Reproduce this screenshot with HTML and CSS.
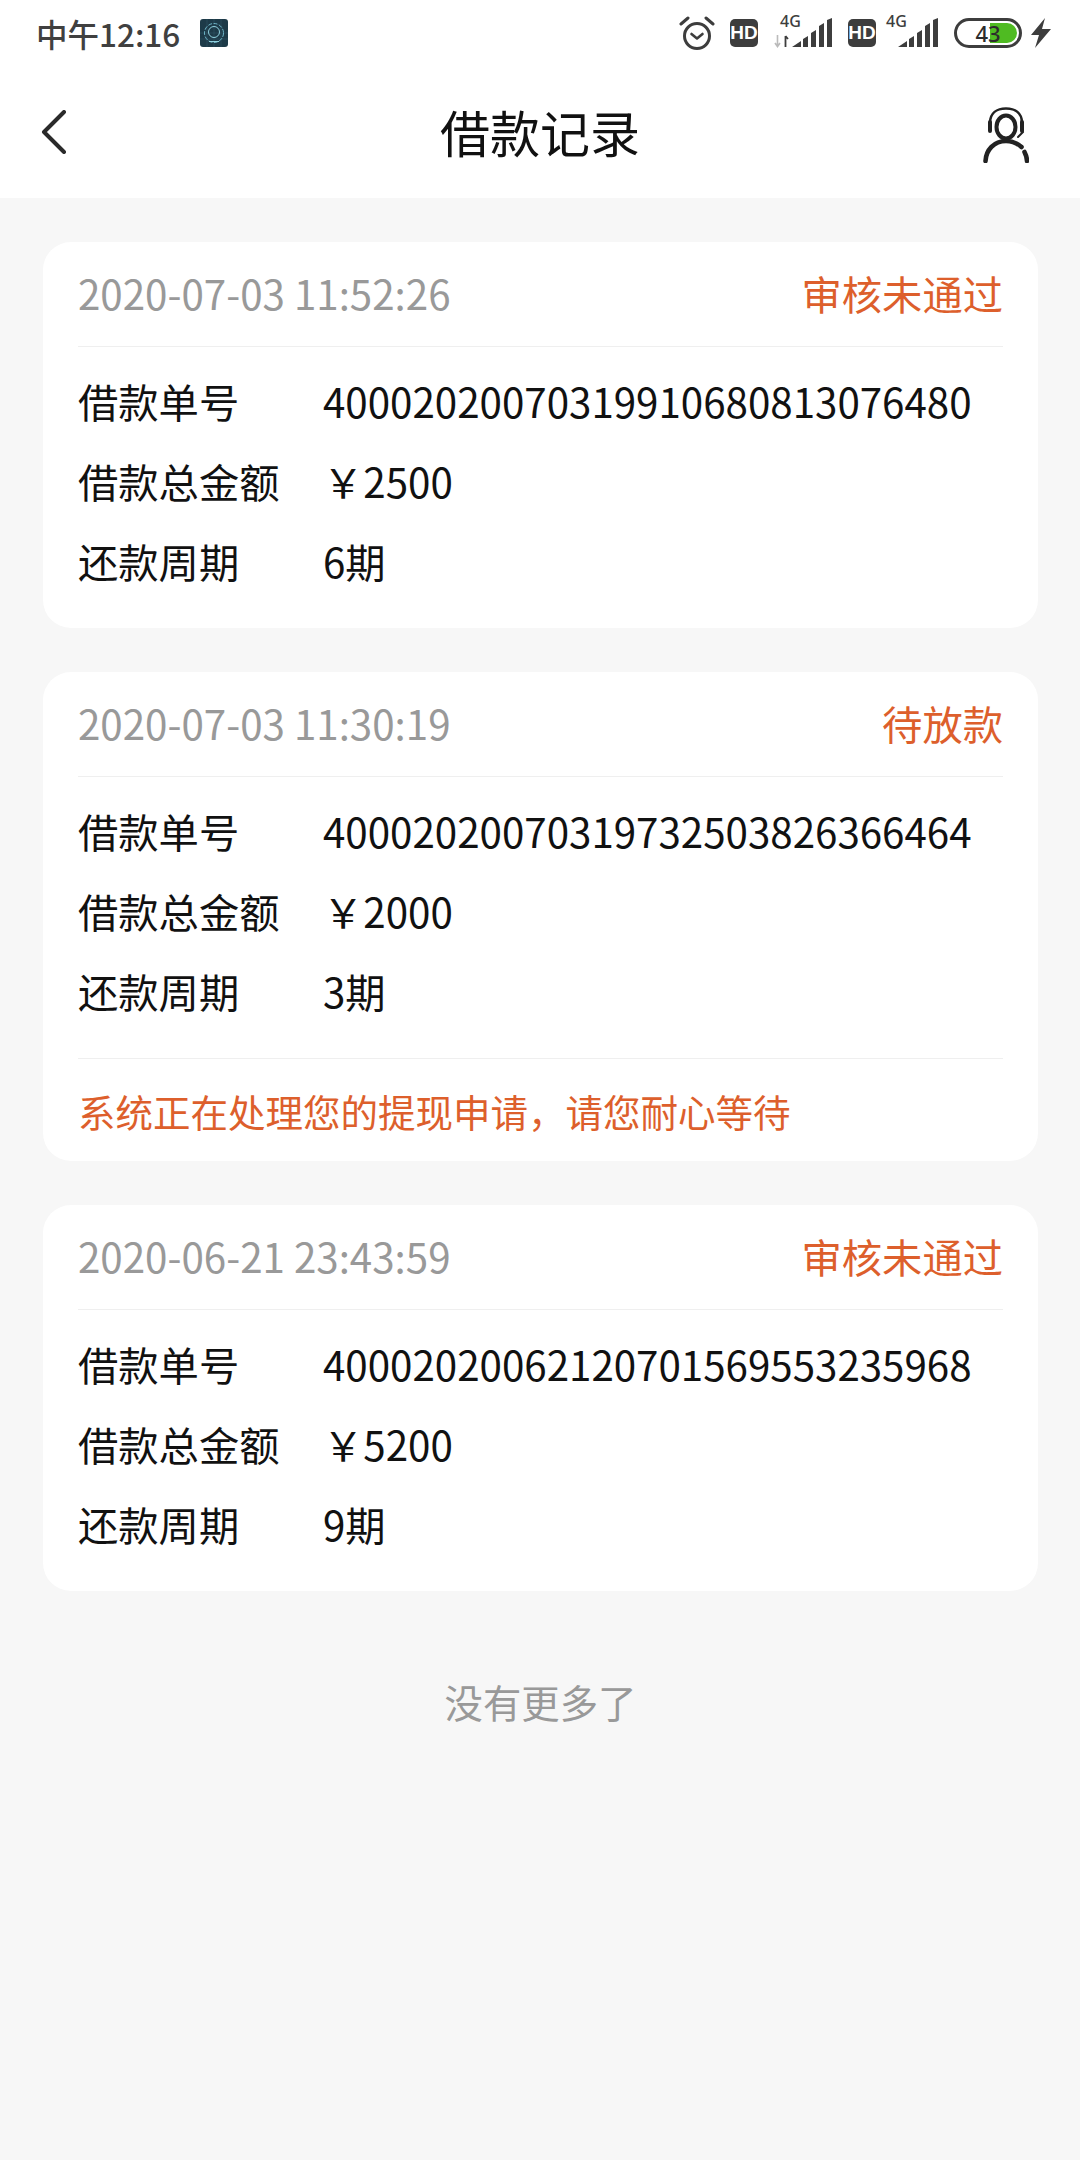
FILE: index.html
```html
<!DOCTYPE html>
<html lang="zh-CN">
<head>
<meta charset="utf-8">
<title>借款记录</title>
<link rel="stylesheet" href="styles.css">
</head>
<body>
<header class="top">
  <div class="status">
    <div class="status-left">
      <span class="clock">中午12:16</span>
      <svg class="app-icon" width="28" height="28" viewBox="0 0 28 28"><rect width="28" height="28" rx="3" fill="#1d3a48"/><path d="M0 14H28M0 20H28M14 0V28M7 0V28M21 0V28" stroke="#34586a" stroke-width=".5"/><circle cx="14" cy="14" r="9.5" fill="none" stroke="#6fb6c8" stroke-width="1" stroke-dasharray="4 1.5"/><circle cx="14" cy="13" r="5.5" fill="none" stroke="#8fd0de" stroke-width="1"/><path d="M9 22.5h10" stroke="#8fd0de" stroke-width="1"/></svg>
    </div>
    <div class="status-right">
      <svg class="alarm" width="36" height="34" viewBox="0 0 36 34" fill="none" stroke="#3d3d3d" stroke-linecap="round" stroke-linejoin="round"><circle cx="18" cy="20" r="12.5" stroke-width="3"/><path d="M12.5 18l5.5 4.5 5.500-4.500" stroke-width="2.600"/><path d="M2 8l7-6M34 8l-7-6" stroke-width="3"/></svg>
      <span class="hd">HD</span>
      <span class="net net-first">
        <span class="net-label">4G</span>
        <svg width="58" height="30" viewBox="0 0 58 30" fill="#3d3d3d"><path d="M3.500 17v11M1 25l2.500 3.500L6 25" stroke="#bbb" stroke-width="1.600" fill="none"/><path d="M11.500 29V18M11.500 18L14 21" stroke="#3d3d3d" stroke-width="1.800" fill="none"/><path d="M18 29l9-6v6zM29 29v-8l5-3v11zM37 29V15l5-3v17zM45 29V8l5-3v24zM53 29V2l5-2v29z"/></svg>
      </span>
      <span class="hd hd-second">HD</span>
      <span class="net net-second">
        <span class="net-label">4G</span>
        <svg width="50" height="30" viewBox="8 0 50 30" fill="#3d3d3d"><path d="M18 29l9-6v6zM29 29v-8l5-3v11zM37 29V15l5-3v17zM45 29V8l5-3v24zM53 29V2l5-2v29z"/></svg>
      </span>
      <span class="battery"><span class="battery-fill"></span><span class="battery-num">43</span></span>
      <svg class="bolt" width="20" height="30" viewBox="0 0 20 30" fill="#3d3d3d"><path d="M14 0L0 17h8L4 30 20 11h-9z"/></svg>
    </div>
  </div>
  <nav class="nav">
    <svg class="nav-back" width="26" height="44" viewBox="0 0 26 44" fill="none" stroke="#2a2a2a" stroke-width="4" stroke-linecap="round" stroke-linejoin="round"><path d="M23 2L3 22l20 20"/></svg>
    <h1 class="title">借款记录</h1>
    <svg class="nav-service" width="46" height="56" viewBox="0 0 46 56" fill="none" stroke="#222" stroke-linecap="round"><ellipse cx="23" cy="20" rx="9.500" ry="11.500" stroke-width="4"/><path d="M7 16C7 6 14 1.500 23 1.500S39 6 39 16" stroke-width="2.600"/><path d="M7 15v9M39 15v9" stroke-width="4"/><path d="M40 25l-5 5" stroke-width="2"/><path d="M2.500 54C3 43 11 34 23 34c6 0 11 2 15.500 6" stroke-width="4.600"/><path d="M41.500 45c1.500 3 2.500 6 2.500 9" stroke-width="4.600"/></svg>
  </nav>
</header>
<main class="list">
  <article class="card">
    <div class="card-head"><span class="time">2020-07-03 11:52:26</span><span class="state">审核未通过</span></div>
    <div class="rows">
      <div class="row"><span class="label">借款单号</span><span class="value">40002020070319910680813076480</span></div>
      <div class="row"><span class="label">借款总金额</span><span class="value">￥2500</span></div>
      <div class="row"><span class="label">还款周期</span><span class="value">6期</span></div>
    </div>
  </article>
  <article class="card">
    <div class="card-head"><span class="time">2020-07-03 11:30:19</span><span class="state">待放款</span></div>
    <div class="rows">
      <div class="row"><span class="label">借款单号</span><span class="value">40002020070319732503826366464</span></div>
      <div class="row"><span class="label">借款总金额</span><span class="value">￥2000</span></div>
      <div class="row"><span class="label">还款周期</span><span class="value">3期</span></div>
    </div>
    <p class="notice">系统正在处理您的提现申请，请您耐心等待</p>
  </article>
  <article class="card">
    <div class="card-head"><span class="time">2020-06-21 23:43:59</span><span class="state">审核未通过</span></div>
    <div class="rows">
      <div class="row"><span class="label">借款单号</span><span class="value">40002020062120701569553235968</span></div>
      <div class="row"><span class="label">借款总金额</span><span class="value">￥5200</span></div>
      <div class="row"><span class="label">还款周期</span><span class="value">9期</span></div>
    </div>
  </article>
  <p class="end">没有更多了</p>
</main>
</body>
</html>
```
FILE: styles.css
```css
* { box-sizing: border-box; margin: 0; padding: 0; }
html, body { height: 100%; }
body {
  background: #f7f7f7;
  font-family: "Noto Sans CJK SC", "Noto Sans", sans-serif;
  color: #111;
  width: 1080px;
  min-height: 2160px;
}
.top { background: #fff; height: 198px; display: flex; flex-direction: column; }
.status { height: 66px; display: flex; align-items: center; justify-content: space-between; padding: 0 29px 0 36px; }
.status-left { display: flex; align-items: center; gap: 20px; }
.clock { font-size: 31.5px; font-weight: 500; color: #404040; line-height: 40px; }
.status-right { display: flex; align-items: center; }
.alarm { margin-right: 15px; }
.hd { width: 28px; height: 28px; border-radius: 5px; background: #3d3d3d; color: #fff; font: 700 19px/28px "Liberation Sans", sans-serif; text-align: center; }
.hd-second { margin-right: 12px; }
.net { position: relative; display: block; height: 30px; }
.net-first { width: 58px; margin: 0 16px; }
.net-second { width: 50px; margin-right: 16px; }
.net svg { position: absolute; right: 0; bottom: 0; display: block; }
.net-label { position: absolute; left: -2px; top: -6px; font: 500 16px/18px "Noto Sans", sans-serif; color: #3d3d3d; z-index: 1; }
.net-first .net-label { left: 6px; }
.battery { position: relative; display: block; width: 68px; height: 30px; margin-right: 9px; border: 3px solid #3d3d3d; border-radius: 15px; overflow: hidden; }
.battery-fill { position: absolute; left: 33px; top: 2px; bottom: 2px; width: 27px; border-radius: 0 10px 10px 0; background: #4fbb22; }
.battery-num { position: relative; display: block; text-align: center; font: 500 22px/24px "Noto Sans", sans-serif; color: #2c2c2c; }
.nav { flex: 1; display: flex; align-items: center; justify-content: space-between; padding: 0 51px 0 41px; position: relative; }
.nav-service { margin-top: 6px; }
.title { position: absolute; left: 0; right: 0; margin-top: -3px; text-align: center; font-size: 50px; font-weight: 400; color: #111; line-height: 70px; }
.list { padding: 44px 42px 0 43px; display: flex; flex-direction: column; gap: 44px; }
.card { background: #fff; border-radius: 28px; padding: 0 35px; }
.card-head { height: 105px; padding-bottom: 3px; border-bottom: 1px solid #efefef; display: flex; align-items: center; justify-content: space-between; }
.time { font-size: 40.3px; color: #999; line-height: 56px; }
.state { font-size: 40.3px; color: #dd5f2c; line-height: 56px; }
.rows { padding: 14px 0 27px; display: flex; flex-direction: column; }
.row { height: 80px; display: flex; align-items: center; font-size: 40.3px; line-height: 56px; color: #111; }
.label { width: 245px; flex: none; }
.notice { border-top: 1px solid #efefef; font-size: 37.5px; color: #dd5f2c; height: 103px; line-height: 52px; padding-top: 26px; }
.end { text-align: center; font-size: 38.4px; color: #999; line-height: 56px; margin-top: 38px; }
```
